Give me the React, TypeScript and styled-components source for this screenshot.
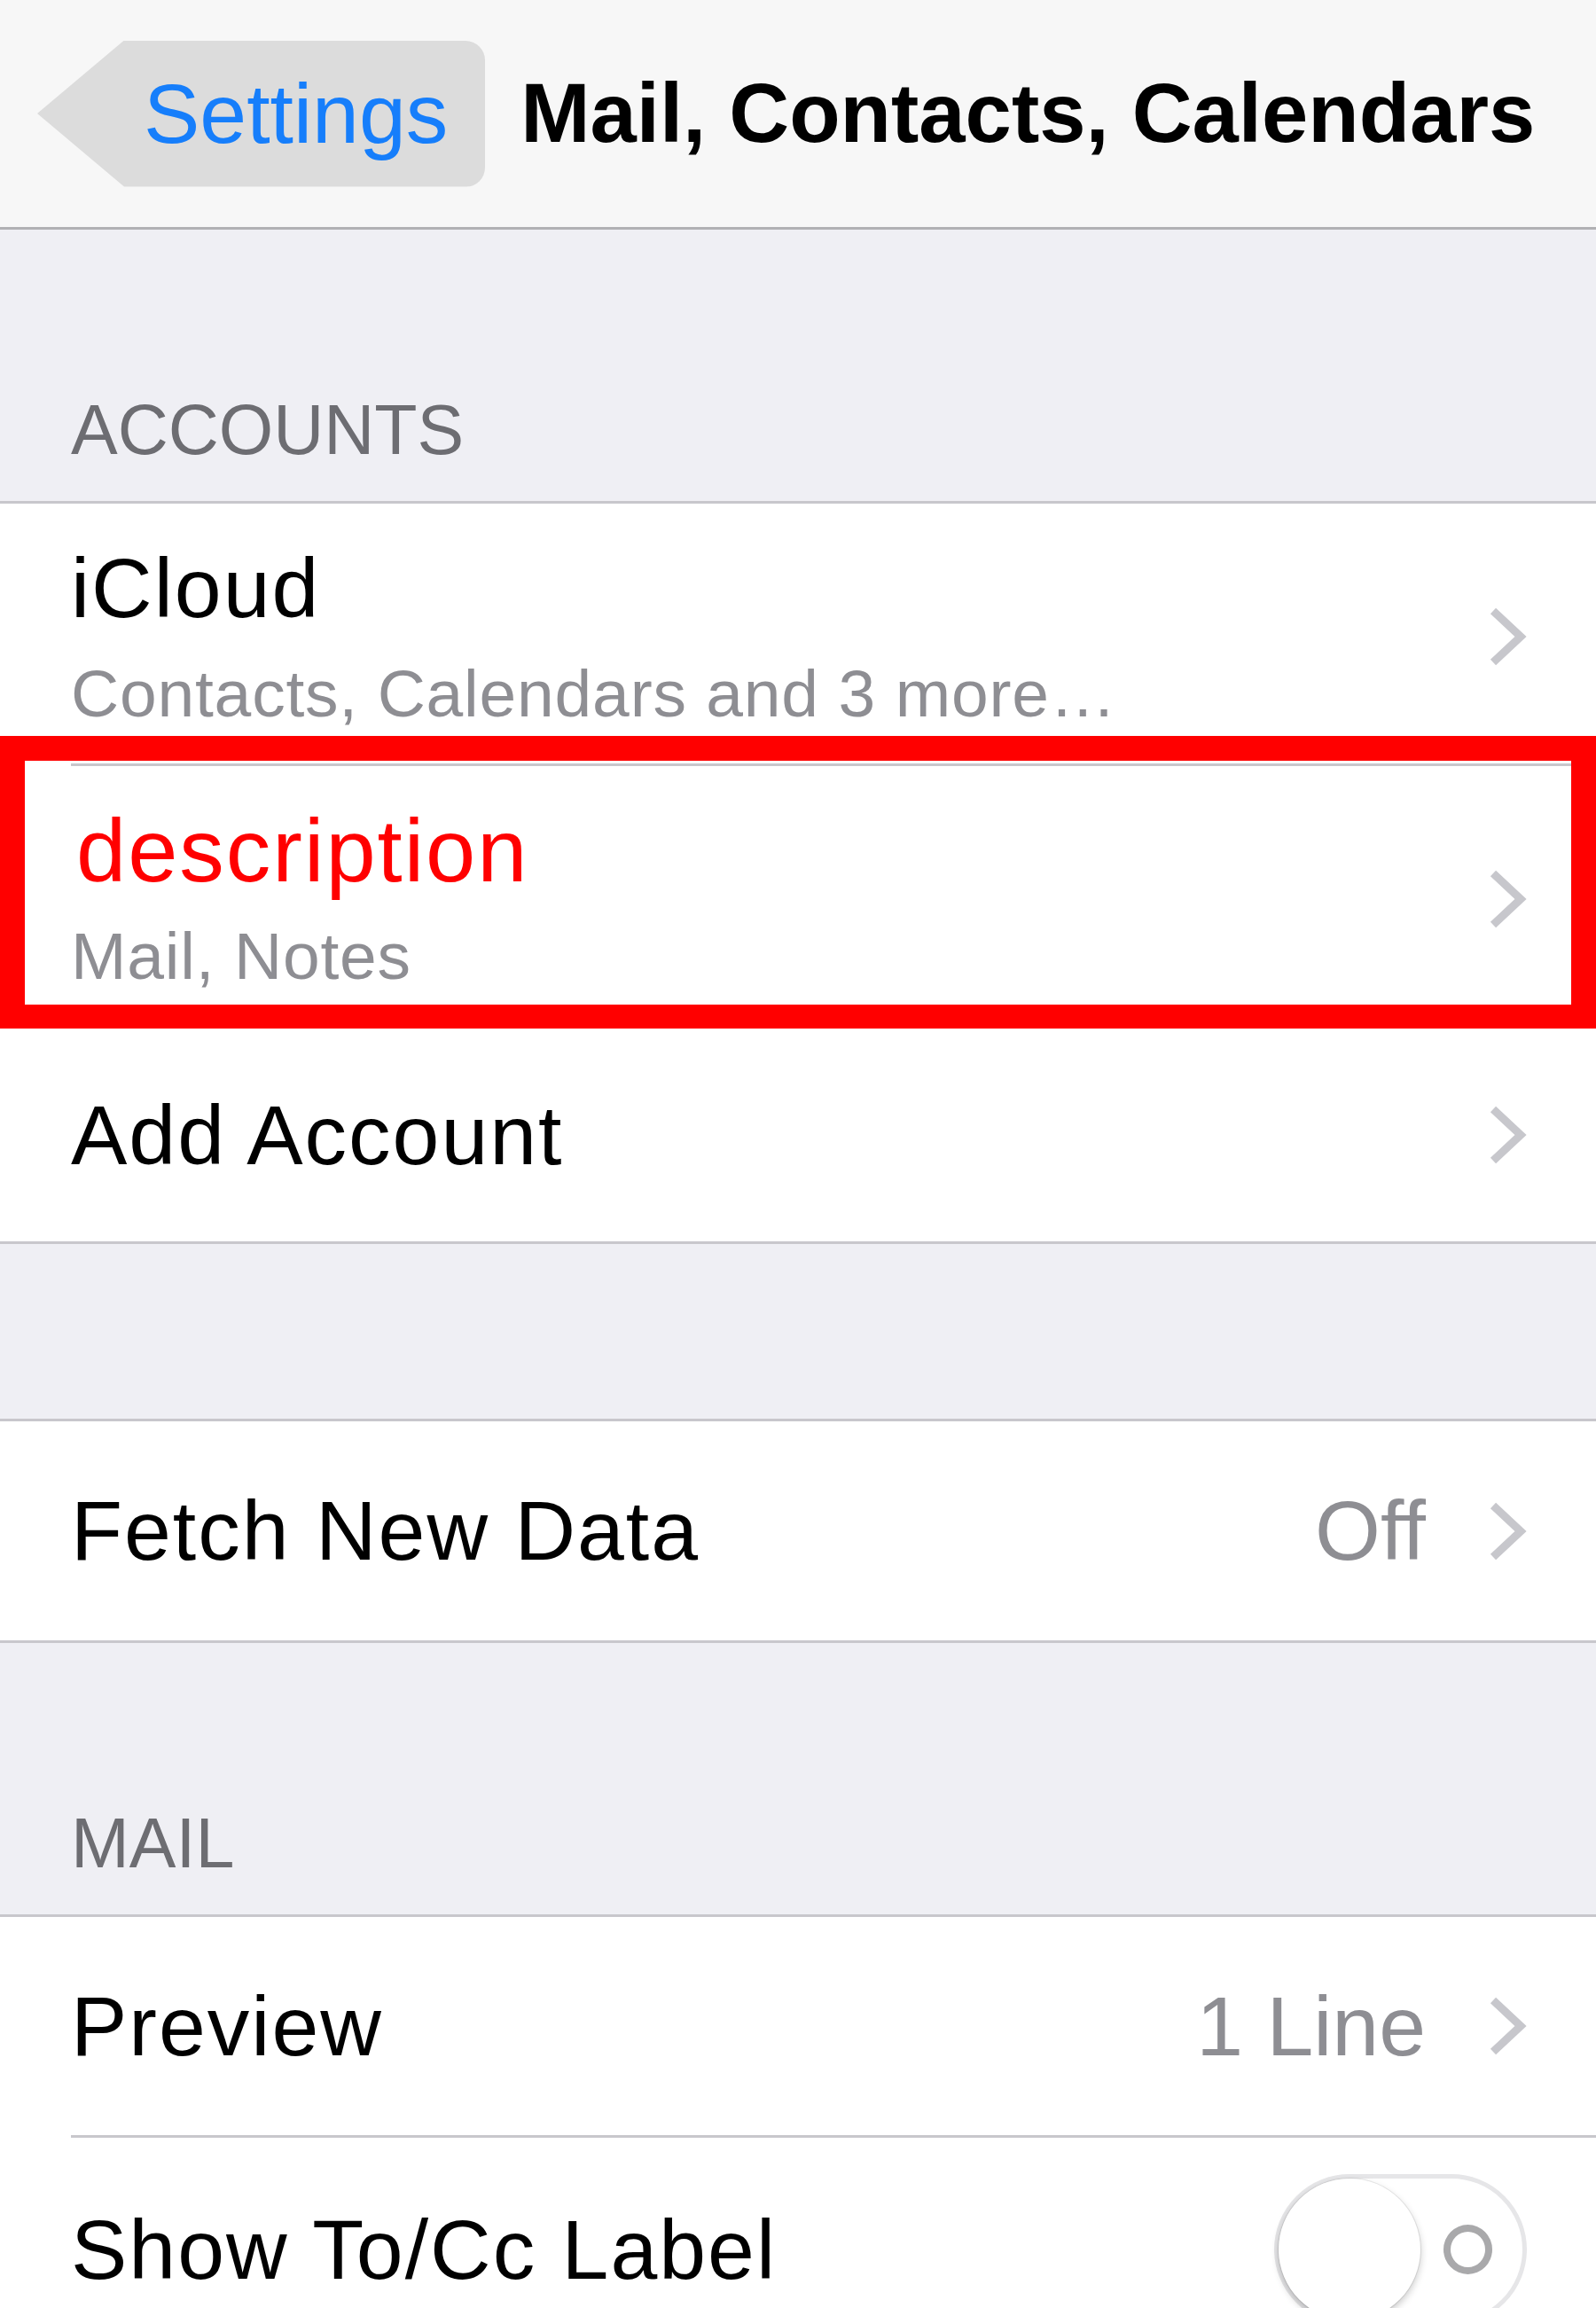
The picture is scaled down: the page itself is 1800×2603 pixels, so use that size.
import React from "react";
import styled, { createGlobalStyle } from "styled-components";

const FONT = `"Liberation Sans", Arial, Helvetica, sans-serif`;

const GlobalStyle = createGlobalStyle`
  *, *::before, *::after { box-sizing: border-box; }
  html, body { margin: 0; padding: 0; background: #efeff4; }
  body { font-family: ${FONT}; -webkit-font-smoothing: antialiased; }
`;

const Screen = styled.div`
  width: 1800px;
  height: 2603px;
  overflow: hidden;
  display: flex;
  flex-direction: column;
  background: #efeff4;
`;

const NavBar = styled.header`
  flex: none;
  height: 259px;
  display: flex;
  align-items: center;
  gap: 40px;
  padding-left: 42px;
  background: #f7f7f7;
  border-bottom: 3px solid #b1b1b4;
`;

const BackButton = styled.button`
  height: 165px;
  display: flex;
  align-items: center;
  padding: 0 42px 0 120px;
  border: none;
  border-radius: 22px;
  background: #dcdcdc;
  clip-path: polygon(98px 0, 100% 0, 100% 100%, 98px 100%, 0 50%);
  color: #167efb;
  font: 400 95px/1 ${FONT};
  cursor: pointer;
`;

const Title = styled.h1`
  margin: 0;
  color: #000;
  font: 700 94px/1 ${FONT};
  white-space: nowrap;
`;

const SectionHeader = styled.div`
  flex: none;
  height: 306px;
  display: flex;
  align-items: flex-end;
  padding: 0 80px 41px;
  color: #6d6d72;
  font: 400 79px/79px ${FONT};
`;

const Spacer = styled.div<{ $h: number }>`
  flex: none;
  height: ${(p) => p.$h}px;
`;

const Group = styled.section`
  flex: none;
  background: #fff;
  border-top: 3px solid #c8c7cc;
  border-bottom: 3px solid #c8c7cc;
`;

const RowBody = styled.div<{ $h: number; $stacked?: boolean }>`
  flex: 1;
  height: ${(p) => p.$h}px;
  display: flex;
  align-items: center;
  justify-content: space-between;
  padding-right: 78px;
  padding-top: ${(p) => (p.$stacked ? 6 : 0)}px;
  border-bottom: 3px solid #c8c7cc;
`;

const Row = styled.div`
  position: relative;
  display: flex;
  padding-left: 80px;
  background: #fff;
  &:last-child ${RowBody} {
    border-bottom: none;
  }
`;

const TextStack = styled.div`
  display: flex;
  flex-direction: column;
  gap: 34px;
`;

const Label = styled.span<{ $marked?: boolean }>`
  color: ${(p) => (p.$marked ? "#ff0000" : "#000")};
  font: 400 ${(p) => (p.$marked ? 101 : 95)}px/95px ${FONT};
  letter-spacing: 2px;
  margin-left: ${(p) => (p.$marked ? 6 : 0)}px;
  white-space: nowrap;
`;

const Subtitle = styled.span`
  color: #8e8e93;
  font: 400 75px/75px ${FONT};
  letter-spacing: 0.8px;
  white-space: nowrap;
`;

const Accessory = styled.div`
  display: flex;
  align-items: center;
  gap: 70px;
`;

const Value = styled.span`
  color: #8e8e93;
  font: 400 95px/95px ${FONT};
`;

const Highlight = styled.div`
  position: absolute;
  top: -34px;
  left: 0;
  right: 0;
  bottom: -1px;
  border: 28px solid #ff0000;
  pointer-events: none;
`;

const Toggle = styled.div`
  width: 285px;
  height: 170px;
  display: flex;
  align-items: center;
  gap: 26px;
  border: 5px solid #e6e6e8;
  border-radius: 85px;
  background: #fff;
`;

const Knob = styled.div`
  flex: none;
  width: 160px;
  height: 160px;
  border-radius: 50%;
  background: #fff;
  box-shadow: 0 4px 8px rgba(0, 0, 0, 0.22), 0 0 0 1px rgba(0, 0, 0, 0.08);
`;

const OffMark = styled.div`
  flex: none;
  width: 55px;
  height: 56px;
  border-radius: 50%;
  border: 8px solid #a9a9ab;
`;

const Chevron = () => (
  <svg width="44" height="70" viewBox="0 0 44 70" fill="none">
    <polyline points="6,6 37,35 6,64" stroke="#c7c7cc" strokeWidth="9" strokeLinejoin="miter" />
  </svg>
);

type Item = {
  label: string;
  subtitle?: string;
  value?: string;
  highlight?: boolean;
  toggle?: boolean;
  h: number;
};

const accounts: Item[] = [
  { label: "iCloud", subtitle: "Contacts, Calendars and 3 more…", h: 296 },
  { label: "description", subtitle: "Mail, Notes", highlight: true, h: 296 },
  { label: "Add Account", h: 240 },
];

const fetchRows: Item[] = [{ label: "Fetch New Data", value: "Off", h: 247 }];

const mailRows: Item[] = [
  { label: "Preview", value: "1 Line", h: 249 },
  { label: "Show To/Cc Label", toggle: true, h: 252 },
];

function SettingsRow({ item }: { item: Item }) {
  return (
    <Row>
      <RowBody $h={item.h} $stacked={!!item.subtitle}>
        {item.subtitle ? (
          <TextStack>
            <Label $marked={item.highlight}>{item.label}</Label>
            <Subtitle>{item.subtitle}</Subtitle>
          </TextStack>
        ) : (
          <Label>{item.label}</Label>
        )}
        {item.toggle ? (
          <Toggle>
            <Knob />
            <OffMark />
          </Toggle>
        ) : (
          <Accessory>
            {item.value && <Value>{item.value}</Value>}
            <Chevron />
          </Accessory>
        )}
      </RowBody>
      {item.highlight && <Highlight />}
    </Row>
  );
}

export default function App() {
  return (
    <>
      <GlobalStyle />
      <Screen>
        <NavBar>
          <BackButton>Settings</BackButton>
          <Title>Mail, Contacts, Calendars</Title>
        </NavBar>

        <SectionHeader>ACCOUNTS</SectionHeader>
        <Group>
          {accounts.map((a) => (
            <SettingsRow key={a.label} item={a} />
          ))}
        </Group>

        <Spacer $h={197} />
        <Group>
          {fetchRows.map((a) => (
            <SettingsRow key={a.label} item={a} />
          ))}
        </Group>

        <SectionHeader>MAIL</SectionHeader>
        <Group>
          {mailRows.map((a) => (
            <SettingsRow key={a.label} item={a} />
          ))}
        </Group>
      </Screen>
    </>
  );
}
